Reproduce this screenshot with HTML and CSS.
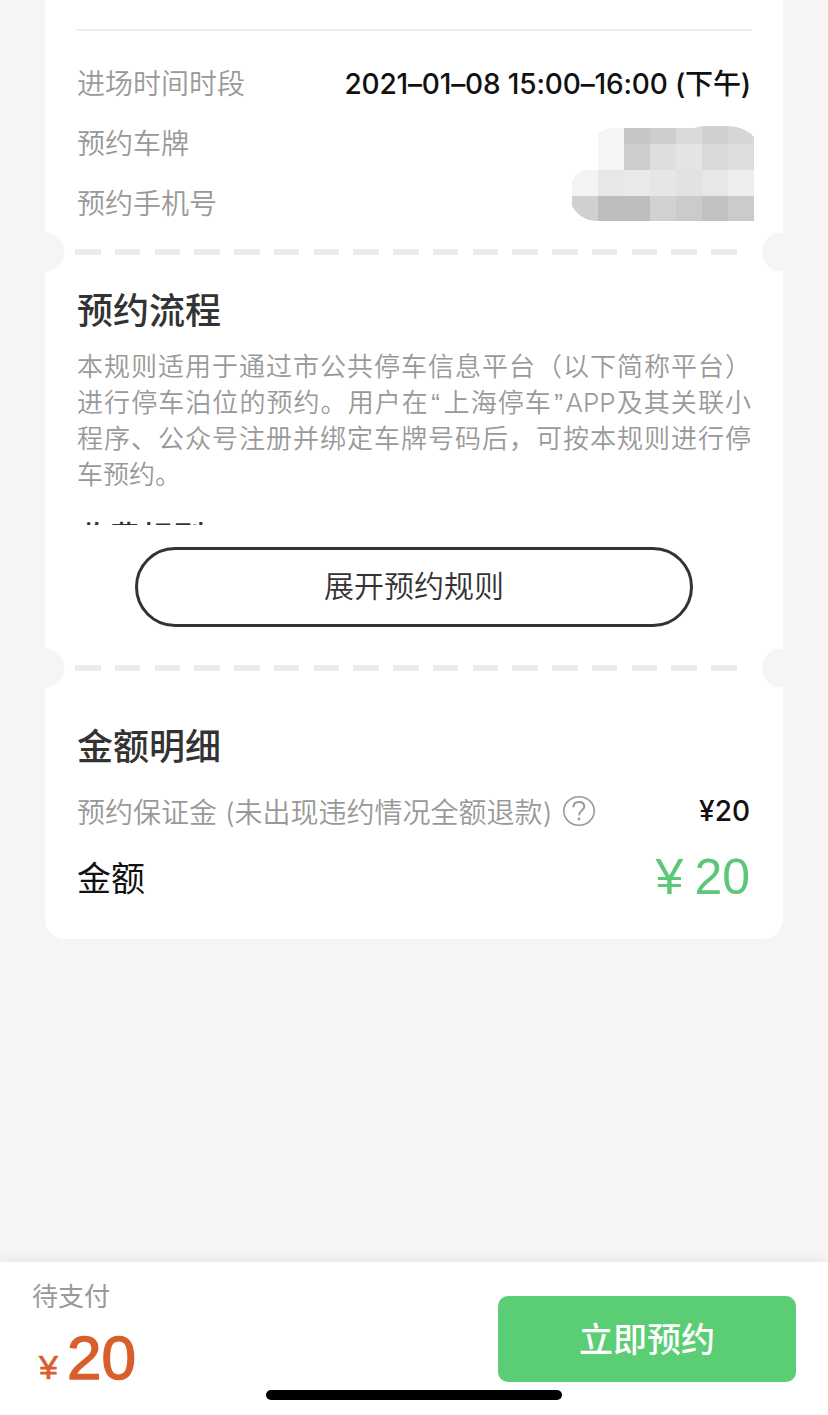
FILE: index.html
```
<!DOCTYPE html>
<html lang="zh-CN">
  <head>
    <meta charset="UTF-8" />
    <meta name="viewport" content="width=device-width, initial-scale=1.0" />
    <title>停车预约</title>
    <link rel="stylesheet" href="styles.css">
  </head>
  <body>
    <main class="card">
      <section class="info">
        <div class="row">
          <span class="label">进场时间时段</span>
          <span class="value time">2021–01–08 15:00–16:00 (下午)</span>
        </div>
        <div class="row">
          <span class="label">预约车牌</span>
        </div>
        <div class="row">
          <span class="label">预约手机号</span>
        </div>
        <svg class="mosaic" width="182" height="95" viewBox="0 0 182 95">
          <clipPath id="blob">
            <path d="M26 8Q32 2 44 2H122Q128 0 134 0H156Q174 1 182 11V95H24Q8 94 0 80V54Q4 48 11 44H26Z" />
          </clipPath>
          <g clip-path="url(#blob)" shape-rendering="crispEdges">
            <path fill="#f5f5f5" d="M26 0h26v44H26z" />
            <path fill="#c5c5c5" d="M52 0h26v18H52z" />
            <path fill="#cdcdcd" d="M78 0h26v18H78z" />
            <path fill="#dadada" d="M104 0h26v18h-26z" />
            <path fill="#d0d0d0" d="M130 0h26v18h-26z" />
            <path fill="#d6d6d6" d="M156 0h26v18h-26z" />
            <path fill="#cecece" d="M52 18h26v26H52z" />
            <path fill="#dedede" d="M78 18h26v26H78z" />
            <path fill="#e4e4e4" d="M104 18h26v26h-26z" />
            <path fill="#d9d9d9" d="M130 18h26v26h-26z" />
            <path fill="#dedede" d="M156 18h26v26h-26z" />
            <path fill="#f3f3f3" d="M0 44h26v26H0z" />
            <path fill="#e7e7e7" d="M26 44h26v26H26z" />
            <path fill="#e9e9e9" d="M52 44h26v26H52z" />
            <path fill="#e6e6e6" d="M78 44h26v26H78z" />
            <path fill="#e2e2e2" d="M104 44h26v26h-26z" />
            <path fill="#e7e7e7" d="M130 44h26v26h-26z" />
            <path fill="#eeeeee" d="M156 44h26v26h-26z" />
            <path fill="#d0d0d0" d="M0 70h26v25H0z" />
            <path fill="#bdbdbd" d="M26 70h52v25H26z" />
            <path fill="#d2d2d2" d="M78 70h26v25H78z" />
            <path fill="#cbcbcb" d="M104 70h26v25h-26z" />
            <path fill="#c1c1c1" d="M130 70h26v25h-26z" />
            <path fill="#cbcbcb" d="M156 70h26v25h-26z" />
          </g>
        </svg>
      </section>

      <div class="tear"></div>

      <section class="rules">
        <h2>预约流程</h2>
        <div class="rules-text">
          <p>本规则适用于通过市公共停车信息平台（以下简称平台）进行停车泊位的预约。用户在<span class="quote">“</span>上海停车<span class="quote">”</span>APP及其关联小程序、公众号注册并绑定车牌号码后，可按本规则进行停车预约。</p>
          <h3>收费规则</h3>
        </div>
        <button class="expand">展开预约规则</button>
      </section>

      <div class="tear"></div>

      <section class="amount">
        <h2>金额明细</h2>
        <div class="row deposit">
          <span class="label">预约保证金 (未出现违约情况全额退款)</span>
          <svg class="help" width="34" height="32" viewBox="0 0 34 32" fill="none" stroke="#999" stroke-width="1.6">
            <ellipse cx="17" cy="16" rx="15.2" ry="14.2" />
            <path stroke-width="2" d="M11.4 12.3C11.4 9 13.5 7 16.9 7C20.2 7 22.3 8.9 22.3 11.6C22.3 15.5 17 15.6 17 20.2" />
            <circle cx="17" cy="24" r="1.4" fill="#999" stroke="none" />
          </svg>
          <span class="value">¥20</span>
        </div>
        <div class="row total">
          <span>金额</span>
          <span class="total-price"><span>¥</span>20</span>
        </div>
      </section>
    </main>

    <footer class="pay-bar">
      <div class="pay">
        <div class="pay-label">待支付</div>
        <div class="pay-price"><span>¥</span>20</div>
      </div>
      <button class="submit">立即预约</button>
      <div class="home-indicator"></div>
    </footer>
  </body>
</html>
```
FILE: styles.css
```
* {
  box-sizing: border-box;
}

body {
  margin: 0;
  height: 1415px;
  display: flex;
  flex-direction: column;
  justify-content: space-between;
  background: #f5f5f5;
  color: #111;
  font-family: Inter, "Noto Sans CJK SC", sans-serif;
  overflow: hidden;
}

h2,
h3 {
  margin: 0;
  color: #333;
  font-size: 36px;
  line-height: 50px;
  font-weight: 500;
}

button {
  font-family: inherit;
  padding: 0;
}

.card {
  width: 738px;
  height: 939px;
  margin: 0 auto;
  background: #fff;
  border-radius: 0 0 20px 20px;
}

.info {
  position: relative;
  height: 233px;
  padding: 28px 32px 0;
}

.info::before {
  content: "";
  display: block;
  height: 2px;
  margin: 1px -1px 21px;
  background: #eee;
}

.row {
  display: flex;
  align-items: center;
  height: 60px;
  font-size: 28px;
}

.label {
  color: #999;
  font-weight: 350;
  white-space: nowrap;
}

.value {
  margin-left: auto;
  font-weight: 450;
  white-space: nowrap;
}

.time {
  letter-spacing: -0.15px;
}

.mosaic {
  position: absolute;
  right: 29px;
  top: 126px;
}

/* ticket perforation */
.tear {
  height: 38px;
  background:
    radial-gradient(circle at 0 50%, #f5f5f5 19px, transparent 20px),
    radial-gradient(circle at 100% 50%, #f5f5f5 20px, transparent 21px),
    repeating-linear-gradient(to right, #ececec 0 25.5px, transparent 25.5px 39.75px) 30px 16px / 663px 6px no-repeat;
}

.rules {
  height: 378px;
  padding: 15px 32px 0;
}

.rules-text {
  height: 176px;
  margin-top: 13px;
  overflow: hidden;
}

.rules-text p {
  margin: 0;
  color: #999;
  font-size: 26px;
  font-weight: 350;
  line-height: 36px;
  text-align: justify;
}

.quote {
  margin: 0 2.5px;
  font-family: "Liberation Sans", sans-serif;
  line-height: 1;
}

/* next heading, only its top shows while the rules are collapsed */
h3 {
  margin-top: 20px;
  font-size: 32px;
}

.expand {
  display: block;
  width: 558px;
  height: 80px;
  margin: 22px 0 0 58px;
  padding-bottom: 6px;
  background: #fff;
  border: 3px solid #333;
  border-radius: 40px;
  color: #333;
  font-size: 30px;
  font-weight: 350;
}

.amount {
  padding: 35px 33px 0 32px;
}

.deposit {
  margin-top: 9px;
}

.help {
  margin-left: 10px;
}

.total {
  height: 70px;
  justify-content: space-between;
  font-size: 34px;
}

.total-price {
  padding-top: 2px;
  color: #5bc877;
  font-family: "Liberation Sans", sans-serif;
  font-size: 50px;
}

.total-price span {
  margin-right: 11px;
}

.pay-bar {
  position: relative;
  height: 153px;
  display: flex;
  justify-content: space-between;
  padding: 0 32px;
  background: #fff;
  box-shadow: 0 0 14px rgba(0, 0, 0, 0.08);
}

.pay-label {
  margin-top: 16px;
  color: #999;
  font-size: 26px;
  line-height: 38px;
}

.pay-price {
  padding-left: 7px;
  color: #d85f2b;
  font-family: "Liberation Sans", sans-serif;
  font-size: 62px;
  line-height: 84px;
  -webkit-text-stroke: 1.4px #d85f2b;
}

.pay-price span {
  margin-right: 9px;
  font-size: 34px;
  -webkit-text-stroke-width: 0.7px;
}

.submit {
  width: 298px;
  height: 86px;
  margin-top: 34px;
  padding-bottom: 4px;
  background: #5bcd74;
  border: none;
  border-radius: 10px;
  color: #fff;
  font-size: 34px;
  font-weight: 500;
}

.home-indicator {
  position: absolute;
  left: 266px;
  bottom: 15px;
  width: 296px;
  height: 10px;
  border-radius: 5px;
  background: #000;
}
```
